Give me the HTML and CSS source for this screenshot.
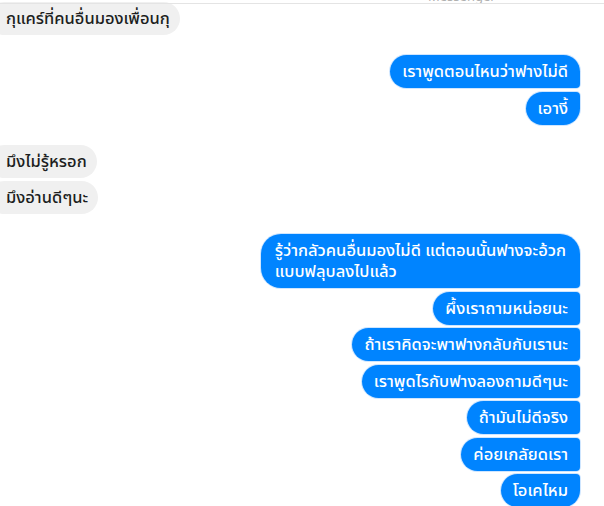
FILE: index.html
```html
<!DOCTYPE html>
<html lang="th">
<head>
<meta charset="utf-8">
<link rel="stylesheet" href="styles.css">
</head>
<body>
<div class="header"><span class="title">Messenger</span></div>
<div class="chat">
  <div class="group them first">
    <div class="bubble">กุแคร์ที่คนอื่นมองเพื่อนกุ</div>
  </div>
  <div class="group me">
    <div class="bubble">เราพูดตอนไหนว่าฟางไม่ดี</div>
    <div class="bubble">เอางี้</div>
  </div>
  <div class="group them">
    <div class="bubble">มึงไม่รู้หรอก</div>
    <div class="bubble">มึงอ่านดีๆนะ</div>
  </div>
  <div class="group me">
    <div class="bubble wide">รู้ว่ากลัวคนอื่นมองไม่ดี แต่ตอนนั้นฟางจะอ้วก<br>แบบฟลุบลงไปแล้ว</div>
    <div class="bubble">ผึ้งเราถามหน่อยนะ</div>
    <div class="bubble">ถ้าเราคิดจะพาฟางกลับกับเรานะ</div>
    <div class="bubble">เราพูดไรกับฟางลองถามดีๆนะ</div>
    <div class="bubble">ถ้ามันไม่ดีจริง</div>
    <div class="bubble">ค่อยเกลัยดเรา</div>
    <div class="bubble">โอเคไหม</div>
  </div>
</div>
</body>
</html>
```
FILE: styles.css
```css
* { box-sizing: border-box; }
html, body {
  margin: 0;
  padding: 0;
  background: #ffffff;
  overflow: hidden;
}
body {
  width: 604px;
  height: 506px;
  font-family: "Noto Sans Thai", Tahoma, "Leelawadee UI", "Noto Sans", "DejaVu Sans", sans-serif;
  font-size: 16.5px;
  font-weight: 500;
  position: relative;
}
.header {
  position: relative;
  height: 4px;
  border-bottom: 1px solid #e4e4e4;
  overflow: hidden;
}
.title {
  position: absolute;
  left: 428px;
  top: -10px;
  font-size: 13px;
  line-height: 14px;
  font-weight: 400;
  color: #b0b0b0;
}
.chat {
  display: flex;
  flex-direction: column;
  gap: 20px;
  padding-right: 24px;
  margin-top: -2px;
}
.group {
  display: flex;
  flex-direction: column;
  gap: 3.5px;
}
.group.me { align-items: flex-end; }
.group.them { align-items: flex-start; }
.bubble {
  line-height: 19px;
  padding: 7px 12px;
  border-radius: 17px;
  white-space: nowrap;
}
.them .bubble {
  background: #f0f0f0;
  color: #1c1e21;
  margin-left: -12px;
  padding-left: 18px;
  padding-right: 10px;
  border-radius: 17px;
}
.me .bubble {
  background: #0084ff;
  color: #ffffff;
  box-shadow: 0 0 0 1px #cfe6ff;
  border-radius: 17px 4px 4px 17px;
}
.me .bubble:first-child { border-top-right-radius: 17px; }
.me .bubble:last-child { border-bottom-right-radius: 17px; }
.me .bubble.wide {
  line-height: 21px;
  padding: 6px 14px 6px;
  border-radius: 20px 20px 4px 20px;
}
```
